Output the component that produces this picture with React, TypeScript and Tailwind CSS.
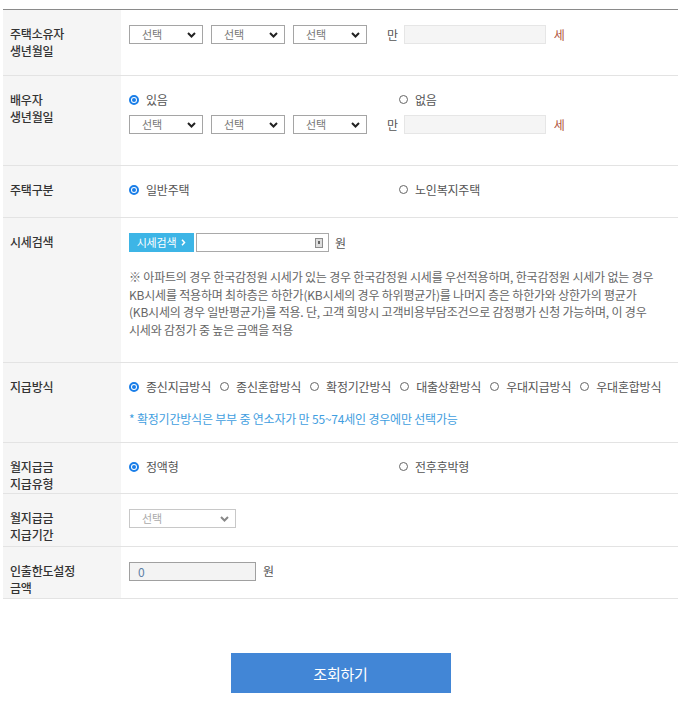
import { FC, ReactNode } from "react";

const Chevron: FC<{ color?: string }> = ({ color = "#222" }) => (
  <svg width="9" height="6" viewBox="0 0 9 6" fill="none">
    <path d="M1 1l3.5 3.5L8 1" stroke={color} strokeWidth="2" />
  </svg>
);

const Select: FC<{ w?: string; disabled?: boolean }> = ({ w = "w-[74px]", disabled }) => (
  <div
    className={`${w} h-[19px] flex items-center justify-between pl-[12px] pr-[6px] border ${
      disabled ? "border-[#c8c8c8] text-[#aaa]" : "border-[#a5a5a5] text-[#777]"
    } text-[11px]`}
  >
    <span>선택</span>
    <Chevron color={disabled ? "#888" : "#222"} />
  </div>
);

const Radio: FC<{ checked?: boolean; label: string }> = ({ checked, label }) => (
  <label className="inline-flex items-center gap-[7px] text-[#555] whitespace-nowrap">
    {checked ? (
      <span className="w-[10px] h-[10px] rounded-full border-[2px] border-[#1a7ee8] flex items-center justify-center">
        <span className="w-[4px] h-[4px] rounded-full bg-[#1a7ee8]" />
      </span>
    ) : (
      <span className="w-[9px] h-[9px] rounded-full border border-[#666]" />
    )}
    <span>{label}</span>
  </label>
);

const Row: FC<{ label: ReactNode; h: string; children: ReactNode }> = ({ label, h, children }) => (
  <div className={`flex ${h} border-b border-[#e3e3e3]`}>
    <div className="w-[118px] shrink-0 bg-[#f5f5f5] pl-[7px] pt-[15px] text-[#333] font-medium leading-[17px]">
      {label}
    </div>
    <div className="flex-1 pl-[8px] pt-[15px]">{children}</div>
  </div>
);

const Birth: FC = () => (
  <div className="flex items-center">
    <div className="flex gap-[8px]">
      <Select />
      <Select />
      <Select />
    </div>
    <span className="ml-[20px] text-[#555]">만</span>
    <div className="ml-[6px] w-[142px] h-[19px] bg-[#f5f5f5] border border-[#e6e6e6]" />
    <span className="ml-[8px] text-[#b0533d]">세</span>
  </div>
);

export default function App() {
  return (
    <div
      className="w-[686px] min-h-[704px] bg-white pt-[9px] px-[3px] text-[12px] leading-[17px] tracking-[-0.2px]"
      style={{ fontFamily: '"Noto Sans CJK KR", "Noto Sans", sans-serif' }}
    >
      <div className="w-[675px] border-t border-[#8a8a8a]">
        <Row label={<>주택소유자<br />생년월일</>} h="h-[66px]">
          <Birth />
        </Row>
        <Row label={<>배우자<br />생년월일</>} h="h-[90px]">
          <div className="grid grid-cols-[270px_1fr]">
            <Radio checked label="있음" />
            <Radio label="없음" />
          </div>
          <div className="mt-[7px]">
            <Birth />
          </div>
        </Row>
        <Row label="주택구분" h="h-[52px]">
          <div className="grid grid-cols-[270px_1fr]">
            <Radio checked label="일반주택" />
            <Radio label="노인복지주택" />
          </div>
        </Row>
        <Row label="시세검색" h="h-[145px]">
          <div className="flex items-center">
            <button className="w-[65px] h-[19px] bg-[#3db5e6] text-white text-[11px] flex items-center justify-center gap-[5px]">
              시세검색
              <svg width="5" height="7" viewBox="0 0 5 7" fill="none">
                <path d="M1 0.8l2.5 2.7L1 6.2" stroke="#fff" strokeWidth="1.5" />
              </svg>
            </button>
            <div className="ml-[2px] w-[133px] h-[19px] border border-[#a9a9a9] flex items-center justify-end pr-[5px]">
              <span className="w-[8px] h-[10px] border border-[#8c8c8c] bg-[#ddd] flex items-center justify-center">
                <span className="w-[2px] h-[3px] bg-[#666]" />
              </span>
            </div>
            <span className="ml-[6px] text-[#555]">원</span>
          </div>
          <p className="mt-[16px] text-[#666] leading-[17.5px] whitespace-nowrap">
            ※ 아파트의 경우 한국감정원 시세가 있는 경우 한국감정원 시세를 우선적용하며, 한국감정원 시세가 없는 경우
            <br />
            KB시세를 적용하며 최하층은 하한가(KB시세의 경우 하위평균가)를 나머지 층은 하한가와 상한가의 평균가
            <br />
            (KB시세의 경우 일반평균가)를 적용. 단, 고객 희망시 고객비용부담조건으로 감정평가 신청 가능하며, 이 경우
            <br />
            시세와 감정가 중 높은 금액을 적용
          </p>
        </Row>
        <Row label="지급방식" h="h-[80px]">
          <div className="flex gap-[9px]">
            <Radio checked label="종신지급방식" />
            <Radio label="종신혼합방식" />
            <Radio label="확정기간방식" />
            <Radio label="대출상환방식" />
            <Radio label="우대지급방식" />
            <Radio label="우대혼합방식" />
          </div>
          <p className="mt-[15px] text-[#3f9ee0]">* 확정기간방식은 부부 중 연소자가 만 55~74세인 경우에만 선택가능</p>
        </Row>
        <Row label={<>월지급금<br />지급유형</>} h="h-[51px]">
          <div className="grid grid-cols-[270px_1fr]">
            <Radio checked label="정액형" />
            <Radio label="전후후박형" />
          </div>
        </Row>
        <Row label={<>월지급금<br />지급기간</>} h="h-[53px]">
          <Select w="w-[107px]" disabled />
        </Row>
        <Row label={<>인출한도설정<br />금액</>} h="h-[52px]">
          <div className="flex items-center">
            <div className="w-[127px] h-[19px] bg-[#f3f3f3] border border-[#a0a0a0] pl-[8px] text-[#5c7fa6] flex items-center">
              0
            </div>
            <span className="ml-[7px] -mt-[3px] text-[#555]">원</span>
          </div>
        </Row>
        <div className="pt-[54px] flex justify-center">
          <button className="w-[220px] h-[40px] bg-[#4286d6] text-white text-[15px]">조회하기</button>
        </div>
      </div>
    </div>
  );
}
